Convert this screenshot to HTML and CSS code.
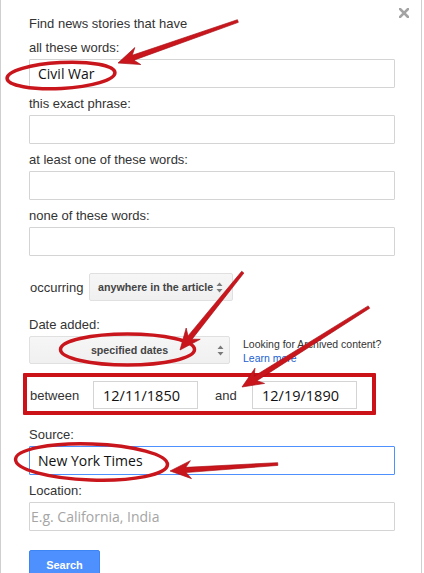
FILE: index.html
```html
<!DOCTYPE html>
<html>
<head>
<meta charset="utf-8">
<link rel="stylesheet" href="styles.css">
</head>
<body>
<div class="dialog">
  <svg class="close" width="10" height="10" viewBox="0 0 10 10"><path d="M1 1L9 9M9 1L1 9" stroke="#a3a3a3" stroke-width="2.6" stroke-linecap="square"/></svg>
  <div class="intro">Find news stories that have</div>

  <div class="field">
    <div class="label">all these words:</div>
    <input class="box" type="text" value="Civil War">
  </div>
  <div class="field">
    <div class="label">this exact phrase:</div>
    <input class="box" type="text">
  </div>
  <div class="field">
    <div class="label">at least one of these words:</div>
    <input class="box" type="text">
  </div>
  <div class="field">
    <div class="label">none of these words:</div>
    <input class="box" type="text">
  </div>

  <div class="occur">
    <span class="occur-label">occurring</span>
    <div class="select sel-occur">
      <span class="sel-text">anywhere in the article</span>
      <svg class="spin" width="7" height="11" viewBox="0 0 7 11"><path d="M3.5 0.5L6.5 4H0.5Z M3.5 10.5L6.5 7H0.5Z" fill="#7a7a7a"/></svg>
    </div>
  </div>

  <div class="date-label label">Date added:</div>
  <div class="date-row">
    <div class="select sel-date">
      <span class="sel-text center">specified dates</span>
      <svg class="spin" width="7" height="11" viewBox="0 0 7 11"><path d="M3.5 0.5L6.5 4H0.5Z M3.5 10.5L6.5 7H0.5Z" fill="#7a7a7a"/></svg>
    </div>
    <div class="archive">
      <div>Looking for Archived content?</div>
      <a class="learn">Learn more</a>
    </div>
  </div>

  <div class="between">
    <span class="b-label">between</span>
    <input class="date" type="text" value="12/11/1850">
    <span class="and-label">and</span>
    <input class="date" type="text" value="12/19/1890">
  </div>

  <div class="field source">
    <div class="label">Source:</div>
    <input class="box focus" type="text" value="New York Times">
  </div>
  <div class="field">
    <div class="label">Location:</div>
    <input class="box ph" type="text" placeholder="E.g. California, India">
  </div>

  <div class="btn">Search</div>
</div>

<svg class="notes" width="424" height="573" viewBox="0 0 424 573">
  <g fill="#c9161d" stroke="#a80f15" stroke-width="0.6">
    <polygon transform="translate(118,63) rotate(-19.3)" points="0,0 21,-9 16,-2.6 127,-1.4 127,1.4 16,2.6 21,9"/>
    <polygon transform="translate(180,350) rotate(-51.1)" points="0,0 21,-9 16,-2.6 100,-1.4 100,1.4 16,2.6 21,9"/>
    <polygon transform="translate(242,387) rotate(-32.2)" points="0,0 21,-9 16,-2.6 150,-1.4 150,1.4 16,2.6 21,9"/>
    <polygon transform="translate(170,471) rotate(-3.7)" points="0,0 21,-9 16,-2.6 108,-1.4 108,1.4 16,2.6 21,9"/>
  </g>
  <g fill="none" stroke="#c9161d" stroke-width="3.5">
    <ellipse cx="61" cy="75.5" rx="54" ry="13" transform="rotate(-3 61 75.5)"/>
    <ellipse cx="127.5" cy="349.5" rx="67" ry="15.5"/>
    <ellipse cx="91.5" cy="462" rx="76" ry="18" transform="rotate(2 91.5 462)"/>
  </g>
</svg>
</body>
</html>
```

FILE: styles.css
```css
* { box-sizing: border-box; }
html, body { margin: 0; padding: 0; background: #fff; }
body {
  font-family: "Liberation Sans", Arial, sans-serif;
  font-size: 13px;
  color: #333;
  width: 424px;
  height: 573px;
  overflow: hidden;
  position: relative;
}
.dialog {
  position: relative;
  width: 422px;
  min-height: 573px;
  border-left: 1px solid #cfcfcf;
  border-right: 1px solid #cfcfcf;
  padding: 16px 26px 0 28px;
  display: flex;
  flex-direction: column;
}
.close {
  position: absolute;
  left: 398px;
  top: 8px;
}
.intro, .label {
  line-height: 16px;
  height: 16px;
}
.field { margin-top: 8px; display: flex; flex-direction: column; }
.box {
  margin: 3px 0 0 0;
  width: 366px;
  height: 29px;
  border: 1px solid #d4d4d4;
  border-radius: 1px;
  padding: 0 0 0 8px;
  font-family: "Open Sans", sans-serif;
  font-size: 14px;
  color: #111;
  outline: none;
  background: #fff;
}
.box.focus { border-color: #4d90fe; }
.box.ph { padding-left: 1px; }
.box.ph::placeholder { color: #a5a5a5; }
.occur {
  margin-top: 17px;
  display: flex;
  align-items: center;
  height: 28px;
}
.occur-label { width: 59px; margin-left: 1px; }
.select {
  height: 28px;
  background: linear-gradient(#f6f6f6, #f0f0f0);
  border: 1px solid #e0e0e0;
  border-radius: 2px;
  display: flex;
  align-items: center;
  font-weight: bold;
  font-size: 10.7px;
  color: #444;
  white-space: nowrap;
}
.sel-occur { width: 144px; padding: 0 9px 0 8px; }
.sel-occur .spin { margin-left: auto; flex: none; }
.sel-date { width: 201px; padding: 0 5px 0 0; }
.sel-text.center { flex: 1; text-align: center; padding-left: 12px; }
.date-label { margin-top: 16px; }
.date-row {
  margin-top: 3px;
  display: flex;
  align-items: flex-start;
}
.archive {
  margin: 2px 0 0 13px;
  font-size: 10.5px;
  line-height: 13.5px;
  color: #333;
}
.learn { color: #1a5fd0; display: block; }
.between {
  margin: 8px 0 0 -6px;
  width: 353px;
  height: 42px;
  border: 4px solid #cc1219;
  border-radius: 1px;
  padding: 4px 0 2px 3px;
  display: flex;
  align-items: center;
}
.b-label { width: 63px; }
.and-label { width: 54px; padding-left: 17px; }
.date {
  width: 105px;
  height: 28px;
  margin: 0;
  border: 1px solid #d4d4d4;
  padding: 0 0 0 9px;
  font-family: "Open Sans", sans-serif;
  font-size: 14.5px;
  color: #111;
  outline: none;
}
.source { margin-top: 12px; }
.btn {
  margin-top: 19px;
  width: 71px;
  height: 29px;
  background: #4d90fe;
  border: 1px solid #3f84f3;
  border-radius: 2px;
  color: #fff;
  font-weight: bold;
  font-size: 11px;
  display: flex;
  align-items: center;
  justify-content: center;
}
.notes {
  position: absolute;
  left: 0;
  top: 0;
  pointer-events: none;
}
```
